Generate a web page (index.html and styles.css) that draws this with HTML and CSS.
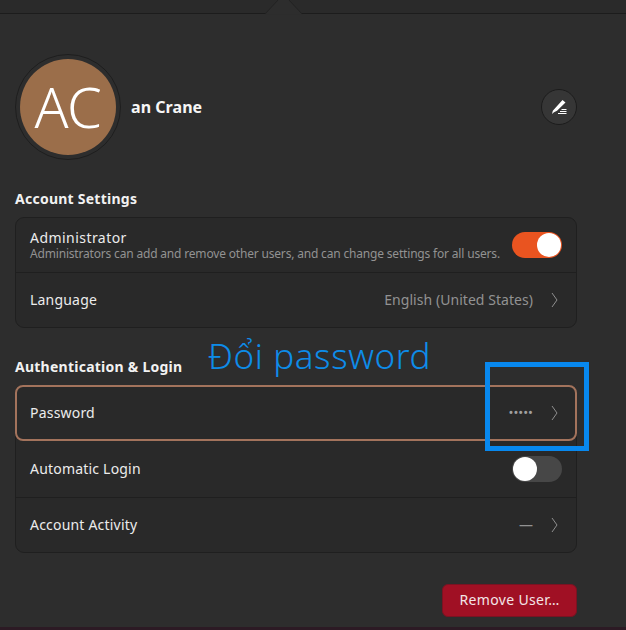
FILE: index.html
```html
<!DOCTYPE html>
<html lang="en">
<head>
<meta charset="utf-8">
<title>Users</title>
<link rel="stylesheet" href="styles.css">
</head>
<body>
<div class="window">
  <header class="topbar">
    <svg class="notch" width="38" height="15" viewBox="0 0 38 15"><path d="M0 14.500 13.500-.5h10L37.500 14.500Z" fill="#2d2d2d"/><path d="M0 14 13 0M24 0 37 14" stroke="#232323" stroke-width="1" fill="none"/></svg>
  </header>
  <main class="content">
    <section class="profile">
      <div class="avatar-ring"><div class="avatar">AC</div></div>
      <div class="username">an Crane</div>
      <button class="edit" aria-label="Edit name">
        <svg width="16" height="16" viewBox="0 0 16 16"><path d="M11.500 1 14.500 3.400 6 11.800 3 13.200 1 15 1.800 11.800Z" fill="#fff"/><path d="M10.500 10.500h5M9 12.500h6.500M7 14.500h8.500" stroke="#fff" stroke-width="1"/></svg>
      </button>
    </section>

    <h2 class="heading first">Account Settings</h2>
    <div class="card">
      <div class="row">
        <div class="label-stack">
          <span class="label">Administrator</span>
          <span class="sub">Administrators can add and remove other users, and can change settings for all users.</span>
        </div>
        <span class="switch on"><span class="knob"></span></span>
      </div>
      <div class="row">
        <span class="label">Language</span>
        <span class="value">English (United States)</span>
        <svg class="chev" width="7" height="16" viewBox="0 0 7 16"><path d="M1 1l5 7-5 7" fill="none" stroke="#8f8f8f" stroke-width="1"/></svg>
      </div>
    </div>

    <h2 class="heading second">Authentication &amp; Login</h2>
    <div class="card">
      <div class="row focused">
        <span class="label">Password</span>
        <span class="value dots">•••••</span>
        <svg class="chev" width="7" height="16" viewBox="0 0 7 16"><path d="M1 1l5 7-5 7" fill="none" stroke="#8f8f8f" stroke-width="1"/></svg>
      </div>
      <div class="row after-focus">
        <span class="label">Automatic Login</span>
        <span class="switch"><span class="knob"></span></span>
      </div>
      <div class="row">
        <span class="label">Account Activity</span>
        <span class="value">—</span>
        <svg class="chev" width="7" height="16" viewBox="0 0 7 16"><path d="M1 1l5 7-5 7" fill="none" stroke="#8f8f8f" stroke-width="1"/></svg>
      </div>
    </div>

    <div class="actions"><button class="danger">Remove User…</button></div>
  </main>
  <div class="bottom-strip"></div>
</div>
<div class="annotation-text">Đổi password</div>
<div class="annotation-box"></div>
</body>
</html>
```
FILE: styles.css
```css
* { box-sizing: border-box; }
html, body { margin: 0; height: 100%; }
body {
  background: #2d2d2d;
  color: #f2f2f2;
  font-family: "Noto Sans", "Open Sans", sans-serif;
  font-size: 14px;
  overflow: hidden;
  position: relative;
}
.window { width: 626px; height: 630px; display: flex; flex-direction: column; }
.topbar {
  height: 14px;
  flex: none;
  background: #2a2a2a;
  border-bottom: 1px solid #1c1c1c;
  position: relative;
}
.notch { position: absolute; left: 265px; top: 0; display: block; }
.content { flex: 1; padding: 0 49px 0 15px; display: flex; flex-direction: column; }
.profile { display: flex; align-items: center; height: 106px; margin-top: 40px; flex: none; }
.avatar-ring {
  width: 106px; height: 106px; border-radius: 50%;
  border: 1px solid #1e1e1e;
  display: flex; align-items: center; justify-content: center;
  flex: none;
}
.avatar {
  width: 96px; height: 96px; border-radius: 50%;
  background: #9b6e4a;
  color: #fff;
  font-size: 56px;
  font-weight: 300;
  letter-spacing: -0.5px;
  text-align: center;
  line-height: 94px;
}
.username { margin-left: 10px; font-size: 16px; font-weight: 700; letter-spacing: 0.05px; flex: 1; color: #f6f6f6; }
.edit {
  width: 36px; height: 36px; border-radius: 50%;
  background: #363636;
  border: 1px solid #1c1c1c;
  padding: 0;
  display: flex; align-items: center; justify-content: center;
  flex: none;
}
.heading { margin: 0; font-size: 14px; font-weight: 700; color: #f2f2f2; line-height: 19px; height: 19px; letter-spacing: 0.25px; flex: none; }
.heading.first { margin-top: 29px; margin-bottom: 9px; }
.heading.second { margin-top: 29px; margin-bottom: 9px; }
.card {
  background: #292929;
  border: 1px solid #1f1f1f;
  border-radius: 9px;
  flex: none;
}
.row {
  height: 55px;
  padding: 0 14px;
  display: flex;
  align-items: center;
  border-top: 1px solid #1f1f1f;
}
.row:first-child { border-top: 0; height: 54px; }
.label { color: #ececec; font-size: 14px; letter-spacing: 0.2px; padding-bottom: 2px; flex: 1; }
.label-stack { display: flex; flex-direction: column; flex: 1; }
.label-stack .label { flex: none; line-height: 15px; letter-spacing: 0.45px; padding-bottom: 1px; }
.sub { font-size: 12px; line-height: 15px; color: #929292; white-space: nowrap; letter-spacing: -0.18px; }
.value { color: #929292; font-size: 14px; letter-spacing: 0.05px; padding-bottom: 2px; margin-right: 18px; }
.dots { font-size: 13px; color: #a0a0a0; letter-spacing: 0; }
.chev { flex: none; margin-right: 4px; }
.row.focused {
  border: 2px solid #a3735c;
  border-radius: 8px;
  margin: -1px -1px 0 -1px;
  padding: 0 13px;
  height: 56px;
}
.row.after-focus { border-top: 0; height: 56px; }
.switch {
  width: 50px; height: 26px; border-radius: 13px;
  background: #474747;
  display: flex; align-items: center; padding: 1px;
  flex: none;
}
.knob { width: 24px; height: 24px; border-radius: 50%; background: #fff; }
.switch.on { background: #e95420; justify-content: flex-end; }
.actions { display: flex; justify-content: flex-end; margin-top: 31px; flex: none; }
.danger {
  width: 135px; height: 33px;
  background: #a01024;
  color: #f3e6e8;
  border: 1px solid #7a1322;
  border-radius: 6px;
  font: 14px "Noto Sans", sans-serif;
  letter-spacing: 0.35px;
  padding: 0 0 2px;
}
.bottom-strip { height: 3px; background: #2c1a24; flex: none; }
.annotation-text {
  position: absolute;
  left: 208px; top: 333px;
  font-weight: 300;
  font-size: 35px;
  letter-spacing: 0.6px;
  line-height: 46px;
  color: #0d8ce9;
  white-space: nowrap;
}
.annotation-box {
  position: absolute;
  left: 485px; top: 362px;
  width: 104px; height: 89px;
  border: 5px solid #0888ee;
}
```
